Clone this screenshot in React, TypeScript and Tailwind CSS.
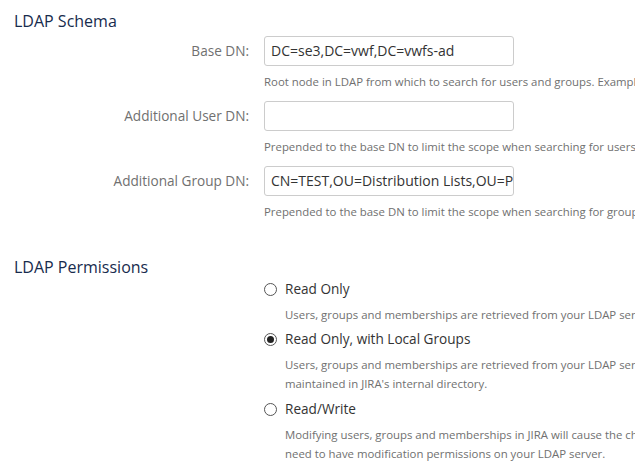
import React from 'react';

const font = { fontFamily: '"Segoe UI", "Open Sans", "Noto Sans", sans-serif' };

interface FieldRowProps {
  label: string;
  value: string;
  help: string;
}

function FieldRow({ label, value, help }: FieldRowProps) {
  return (
    <div className="flex">
      <div className="w-[250px] shrink-0 pr-[1px] pt-[5px] text-right text-[13.6px] leading-[20px] text-[#707070]">
        {label}
      </div>
      <div className="ml-[14px] min-w-0 flex-1">
        <div className="h-[30px] w-[250px] overflow-hidden whitespace-nowrap rounded-[3px] border border-[#cccccc] bg-white px-[6px] text-[14px] leading-[28px] text-[#333333]">
          {value}
        </div>
        <p className="mt-[6px] whitespace-nowrap text-[11.4px] leading-[20px] text-[#707070]">{help}</p>
      </div>
    </div>
  );
}

function Radio({ checked }: { checked?: boolean }) {
  return (
    <span className="mt-[4px] flex size-[13px] shrink-0 items-center justify-center rounded-full border border-[#555555] bg-white">
      {checked ? <span className="size-[7px] rounded-full bg-[#222222]" /> : null}
    </span>
  );
}

interface OptionProps {
  label: string;
  help: string[];
  checked?: boolean;
}

function Option({ label, help, checked }: OptionProps) {
  return (
    <div>
      <label className="flex items-start gap-[8px] text-[13.6px] leading-[20px] text-[#333333]">
        <Radio checked={checked} />
        <span>{label}</span>
      </label>
      <div className="mt-[6px] mb-[5px] pl-[21px] text-[11.4px] leading-[19px] text-[#707070]">
        {help.map((line) => (
          <p key={line} className="whitespace-nowrap">
            {line}
          </p>
        ))}
      </div>
    </div>
  );
}

export default function App() {
  return (
    <div className="h-[463px] w-[635px] overflow-hidden bg-white" style={font}>
      <div className="px-[14px] pt-[10px]">
        <h2 className="text-[16px] leading-[22px] text-[#172b4d]">LDAP Schema</h2>
      </div>
      <div className="mt-[4px] flex flex-col gap-[9px]">
        <FieldRow
          label="Base DN:"
          value="DC=se3,DC=vwf,DC=vwfs-ad"
          help="Root node in LDAP from which to search for users and groups. Example: cn=users,dc=example,dc=com"
        />
        <FieldRow
          label="Additional User DN:"
          value=""
          help="Prepended to the base DN to limit the scope when searching for users."
        />
        <FieldRow
          label="Additional Group DN:"
          value="CN=TEST,OU=Distribution Lists,OU=Plants"
          help="Prepended to the base DN to limit the scope when searching for groups."
        />
      </div>
      <div className="px-[14px] pt-[34px]">
        <h2 className="text-[16px] leading-[22px] text-[#172b4d]">LDAP Permissions</h2>
      </div>
      <div className="ml-[264px] mt-[1px]">
        <Option
          label="Read Only"
          help={['Users, groups and memberships are retrieved from your LDAP server and cannot be modified.']}
        />
        <Option
          checked
          label="Read Only, with Local Groups"
          help={[
            'Users, groups and memberships are retrieved from your LDAP server and cannot be modified. Local groups are',
            "maintained in JIRA's internal directory.",
          ]}
        />
        <div className="pt-[1px]">
          <Option
            label="Read/Write"
            help={[
              'Modifying users, groups and memberships in JIRA will cause the changes to be applied to your LDAP server. You',
              'need to have modification permissions on your LDAP server.',
            ]}
          />
        </div>
      </div>
    </div>
  );
}
